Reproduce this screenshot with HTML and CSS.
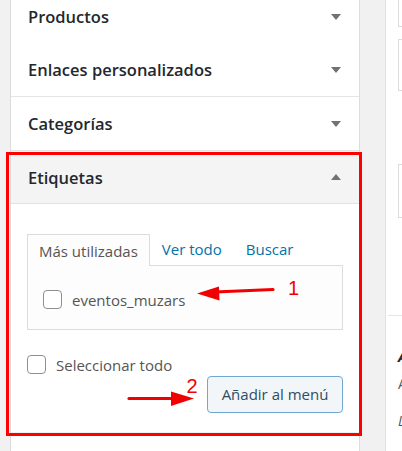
FILE: index.html
```html
<!DOCTYPE html>
<html lang="es">
<head>
<meta charset="utf-8">
<title>Menús</title>
<link rel="stylesheet" href="styles.css">
</head>
<body>
<div class="page">
  <div class="left">
    <div class="section">
      <div class="sec-head"><span class="sec-title">Productos</span><span class="tri down"></span></div>
    </div>
    <div class="section">
      <div class="sec-head"><span class="sec-title">Enlaces personalizados</span><span class="tri down"></span></div>
    </div>
    <div class="section bordered">
      <div class="sec-head"><span class="sec-title">Categorías</span><span class="tri down"></span></div>
    </div>
    <div class="section bordered open">
      <div class="sec-head"><span class="sec-title">Etiquetas</span><span class="tri up"></span></div>
      <div class="sec-body">
        <div class="tabs">
          <span class="tab active">Más utilizadas</span>
          <span class="tab">Ver todo</span>
          <span class="tab">Buscar</span>
        </div>
        <div class="tab-panel">
          <label class="check-row"><input type="checkbox" class="cb"><span>eventos_muzars</span></label>
        </div>
        <div class="actions">
          <label class="check-row select-all"><input type="checkbox" class="cb"><span>Seleccionar todo</span></label>
          <div class="btn-row"><button class="btn">Añadir al menú</button></div>
        </div>
      </div>
    </div>
    <div class="section rest"></div>
  </div>
  <div class="right">
    <div class="box b1"></div>
    <div class="box b2"></div>
    <div class="box b3"></div>
    <div class="rule"></div>
    <h3 class="r-title">Ajustes del menú</h3>
    <p class="r-line">Añadir páginas automáticamente</p>
    <p class="r-line it">Localización del tema</p>
  </div>
  <svg class="notes" width="402" height="451" viewBox="0 0 402 451">
    <rect x="7.5" y="153.5" width="353" height="281" fill="none" stroke="#ff0000" stroke-width="3"/>
    <line x1="273" y1="289.5" x2="215" y2="292" stroke="#f00000" stroke-width="3.2" stroke-linecap="round"/>
    <polygon points="197,293.5 219,286.5 219.5,300.5" fill="#f00000"/>
    <text x="288" y="295" class="num">1</text>
    <line x1="129" y1="398.5" x2="175" y2="398.5" stroke="#f00000" stroke-width="3.2" stroke-linecap="round"/>
    <polygon points="194,398.5 171,391.5 171,406" fill="#f00000"/>
    <text x="186.5" y="392.5" class="num">2</text>
  </svg>
</div>
</body>
</html>
```

FILE: styles.css
```css
* { box-sizing: border-box; }
html, body { margin: 0; padding: 0; }
body {
  background: #f1f1f1;
  font-family: "Open Sans", "Noto Sans", sans-serif;
  color: #555;
  width: 402px;
  height: 451px;
  overflow: hidden;
}
.page {
  position: relative;
  display: flex;
  align-items: flex-start;
  height: 451px;
}
.left {
  margin-left: 10px;
  margin-top: -10px;
  width: 350px;
  flex: none;
  background: #fff;
  border-left: 1px solid #dcdcde;
  border-right: 1px solid #dcdcde;
}
.section.bordered { border-top: 1px solid #e5e5e5; }
.sec-head {
  height: 53px;
  display: flex;
  align-items: center;
  justify-content: space-between;
  padding: 0 18px 0 17px;
}
.sec-title {
  font-size: 16.5px;
  font-weight: 600;
  color: #23282d;
}
.tri {
  width: 0;
  height: 0;
  border-left: 5px solid transparent;
  border-right: 5px solid transparent;
}
.tri.down { border-top: 6px solid #6e7378; margin-top: 1px; }
.tri.up { border-bottom: 6px solid #6e7378; margin-top: -1px; }
.section.open .sec-head {
  background: #f4f4f4;
  border-bottom: 1px solid #e2e2e2;
  height: 53px;
}
.sec-body {
  padding: 30px 16px 19px 16px;
}
.tabs {
  display: flex;
  align-items: stretch;
  height: 31px;
  position: relative;
  z-index: 1;
}
.tab {
  font-size: 15px;
  color: #0073aa;
  padding: 0 11px;
  display: flex;
  align-items: center;
  padding-bottom: 1px;
}
.tab.active + .tab { padding-left: 12px; }
.tab + .tab:last-child { margin-left: 2px; }
.tab.active {
  color: #555;
  background: #fdfdfd;
  border: 1px solid #dcdcdc;
  border-bottom: none;
  height: 32px;
  padding: 0 11px 0 11px;
}
.tab-panel {
  background: #fdfdfd;
  border: 1px solid #dcdcdc;
  height: 65px;
  padding: 24px 15px 0 15px;
}
.check-row {
  display: flex;
  align-items: center;
  font-size: 15px;
  color: #555;
  height: 19px;
}
.check-row span { margin-left: 10px; }
.cb {
  appearance: none;
  -webkit-appearance: none;
  margin: 0;
  width: 19px;
  height: 19px;
  border: 1px solid #8c8f94;
  border-radius: 4px;
  background: #fff;
  flex: none;
}
.actions { padding-top: 25px; }
.btn-row {
  display: flex;
  justify-content: flex-end;
  margin-top: 2px;
}
.btn {
  font-family: "Open Sans", "Noto Sans", sans-serif;
  font-size: 15px;
  color: #2f4d66;
  background: #f2f6f9;
  border: 1px solid #6fa8d0;
  border-radius: 4px;
  height: 37px;
  width: 136px;
  padding: 0 0 1px 0;
}
.section.rest { height: 40px; border-top: 1px solid #f1f1f1; }
.right {
  margin-left: 25px;
  flex: none;
  width: 300px;
  height: 451px;
  background: #fff;
  border-left: 1px solid #e2e2e2;
  padding-left: 12px;
}
.box {
  border: 1px solid #dcdcde;
  border-right: none;
  background: #fff;
}
.b1 { height: 28px; margin-top: -1px; }
.b2 { height: 52px; margin-top: 12px; }
.b3 { height: 54px; margin-top: 73px; }
.rule { border-top: 1px solid #e5e5e5; margin: 97px 0 0 -10px; }
.r-title {
  margin: 30px 0 0 0;
  font-size: 15px;
  font-weight: 700;
  font-style: italic;
  color: #23282d;
}
.r-line {
  margin: 8px 0 0 0;
  font-size: 14px;
  color: #555;
}
.r-line.it { margin-top: 18px; font-style: italic; }
.notes {
  position: absolute;
  left: 0;
  top: 0;
  pointer-events: none;
}
.num {
  font-family: "Liberation Sans", Arial, sans-serif;
  font-size: 20px;
  fill: #f00000;
}
```
